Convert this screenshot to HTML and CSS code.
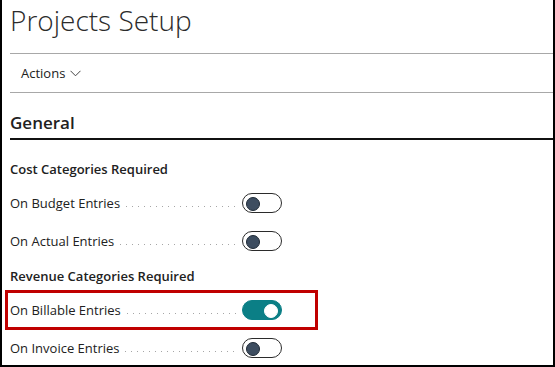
FILE: index.html
```html
<!DOCTYPE html>
<html lang="en">
<head>
    <meta charset="UTF-8">
    <meta name="viewport" content="width=device-width, initial-scale=1.0">
    <title>Projects Setup</title>
    <link rel="stylesheet" href="styles.css">
</head>
<body>
    <div class="page">
        <h1 class="title">Projects Setup</h1>

        <div class="actions">
            <span>Actions</span>
            <svg class="chevron" width="11" height="7" viewBox="0 0 11 7">
                <path d="M0.5 0.8 L5.5 5.8 L10.5 0.8" fill="none" stroke="#444" stroke-width="1"/>
            </svg>
        </div>

        <h2 class="section">General</h2>

        <div class="group">Cost Categories Required</div>
        <div class="field">
            <label class="caption">On Budget Entries</label>
            <span class="toggle"></span>
        </div>
        <div class="field">
            <label class="caption">On Actual Entries</label>
            <span class="toggle"></span>
        </div>

        <div class="group">Revenue Categories Required</div>
        <div class="field highlight">
            <label class="caption">On Billable Entries</label>
            <span class="toggle on"></span>
        </div>
        <div class="field">
            <label class="caption">On Invoice Entries</label>
            <span class="toggle"></span>
        </div>
    </div>
</body>
</html>
```

FILE: styles.css
```css
* {
    margin: 0;
    padding: 0;
    box-sizing: border-box;
}

body {
    font-family: 'Open Sans', 'Noto Sans', Arial, sans-serif;
    color: #212121;
    background: #fff;
}

.page {
    height: 367px;
    border-left: 2px solid #000;
    border-right: 2px solid #000;
    border-bottom: 2px solid #000;
    padding-left: 8px;
    overflow: hidden;
}

.title {
    height: 54px;
    padding-top: 3px;
    font-size: 28px;
    font-weight: 300;
    line-height: 34px;
    color: #2b2b2b;
    border-bottom: 1px solid #a8a8a8;
}

.actions {
    height: 39px;
    display: flex;
    align-items: center;
    gap: 5px;
    padding-left: 11px;
    font-size: 13px;
    border-bottom: 1px solid #a8a8a8;
}

.chevron {
    margin-top: 1px;
}

.section {
    padding-top: 19px;
    padding-bottom: 4px;
    font-size: 17px;
    font-weight: 600;
    line-height: 22px;
    border-bottom: 2px solid #111;
}

.group {
    margin-top: 19px;
    font-size: 13px;
    font-weight: 600;
    line-height: 20px;
}

.group + .field {
    margin-top: 5px;
}

.field + .group {
    margin-top: 6px;
}

.field {
    height: 38px;
    display: flex;
    align-items: center;
    font-size: 13px;
}

.caption {
    width: 232px;
    display: flex;
    align-items: center;
    gap: 6px;
}

.caption::after {
    content: '';
    flex: 1;
    height: 1px;
    margin-top: 6px;
    margin-right: 6px;
    background-image: linear-gradient(to right, #a6a6a6 1px, transparent 1px);
    background-size: 6px 1px;
}

.field.highlight {
    margin-left: -4px;
    padding-left: 4px;
    width: 311px;
    outline: 3px solid #c00000;
    outline-offset: -2px;
}

.toggle {
    position: relative;
    width: 40px;
    height: 20px;
    border: 1px solid #2b2b2b;
    border-radius: 10px;
    background: #fff;
}

.toggle::before {
    content: '';
    position: absolute;
    top: 3px;
    left: 3px;
    width: 12px;
    height: 12px;
    border-radius: 50%;
    background: #3d4d60;
    border: 1px solid #1f2a36;
}

.toggle.on {
    background: #0b7f86;
    border-color: #0b7f86;
}

.toggle.on::before {
    left: auto;
    right: 3px;
    background: #fff;
    border-color: #fff;
}
```
